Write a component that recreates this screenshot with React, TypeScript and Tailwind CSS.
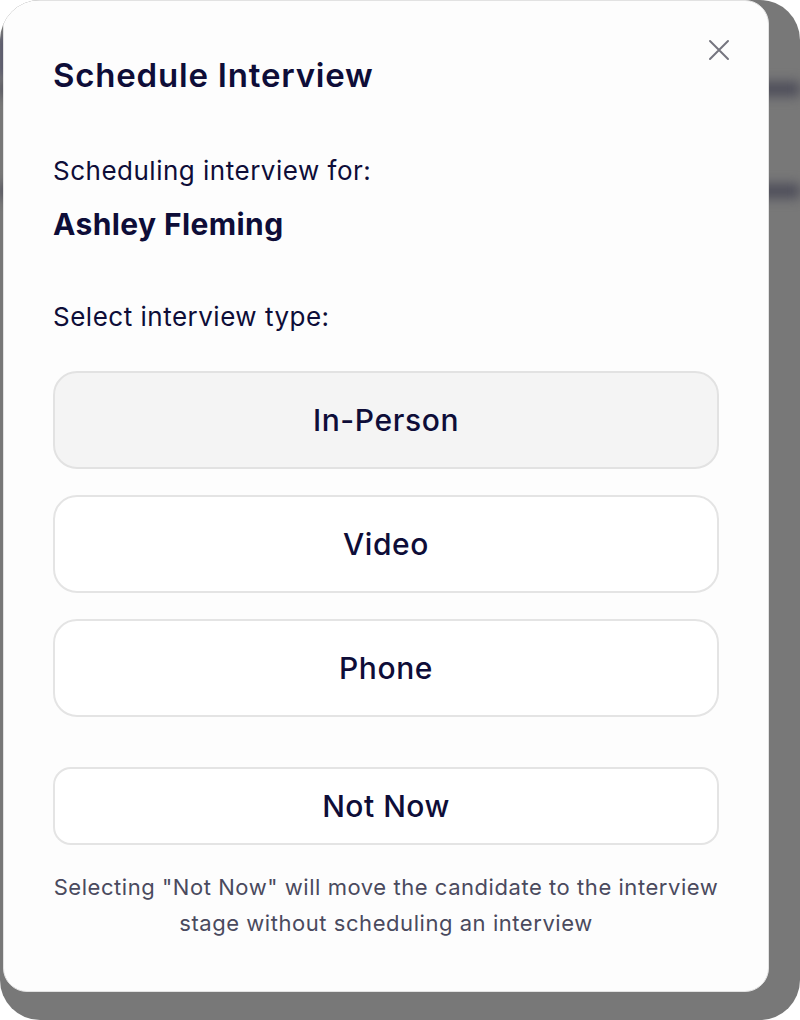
const types = ["In-Person", "Video", "Phone"];

export default function App() {
  const selected = "In-Person";

  return (
    <div className="w-[800px] h-[1020px] bg-white" style={{ fontFamily: "Inter, 'Open Sans', sans-serif" }}>
      <div className="relative h-full rounded-[40px] bg-[#787878] overflow-hidden pl-[3px] pr-[31px] pb-[28px]">
        {/* blurred page behind the backdrop */}
        <div className="absolute left-0 right-0 top-[82px] h-[14px] bg-[#4b4b58] blur-[6px]" />
        <div className="absolute left-0 right-0 top-[184px] h-[14px] bg-[#4b4b58] blur-[6px]" />
        <div className="absolute left-0 w-[10px] top-[36px] h-[40px] bg-[#50506a] blur-[4px]" />

        <div className="relative h-full rounded-[24px] bg-[#fdfdfd] border border-[#e2e2e2] px-[49px] pt-[55px] text-[#0e0d38]">
          <button className="absolute top-[38px] right-[38px] text-[#75757f]">
            <svg width="22" height="22" viewBox="0 0 22 22" fill="none" stroke="currentColor" strokeWidth={2} strokeLinecap="round">
              <path d="M2 2l18 18M20 2L2 20" />
            </svg>
          </button>

          <h2 className="text-[33px] leading-[38px] font-semibold tracking-[0.8px]">Schedule Interview</h2>

          <p className="mt-[61px] text-[26px] leading-[32px] tracking-[0.5px]">Scheduling interview for:</p>
          <p className="mt-[19px] text-[30px] leading-[36px] font-bold tracking-[0.4px]">Ashley Fleming</p>

          <p className="mt-[59px] text-[26px] leading-[32px] tracking-[0.5px]">Select interview type:</p>

          <div className="mt-[38px] flex flex-col gap-[26px]">
            {types.map((t) => (
              <button
                key={t}
                className={
                  t === selected
                    ? "h-[98px] w-full rounded-[24px] border-2 border-[#e2e2e2] bg-[#f4f4f4] text-[30px] font-medium tracking-[0.6px]"
                    : "h-[98px] w-full rounded-[24px] border-2 border-[#e4e4e4] bg-white text-[30px] font-medium tracking-[0.6px]"
                }
              >
                {t}
              </button>
            ))}
          </div>

          <button className="mt-[50px] h-[78px] w-full rounded-[18px] border-2 border-[#e4e4e4] bg-white text-[30px] font-medium tracking-[0.5px]">
            Not Now
          </button>

          <p className="mt-[24px] text-center text-[22px] leading-[36px] tracking-[0.55px] text-[#4a4a5e]">
            Selecting "Not Now" will move the candidate to the interview
            <br />
            stage without scheduling an interview
          </p>
        </div>
      </div>
    </div>
  );
}
